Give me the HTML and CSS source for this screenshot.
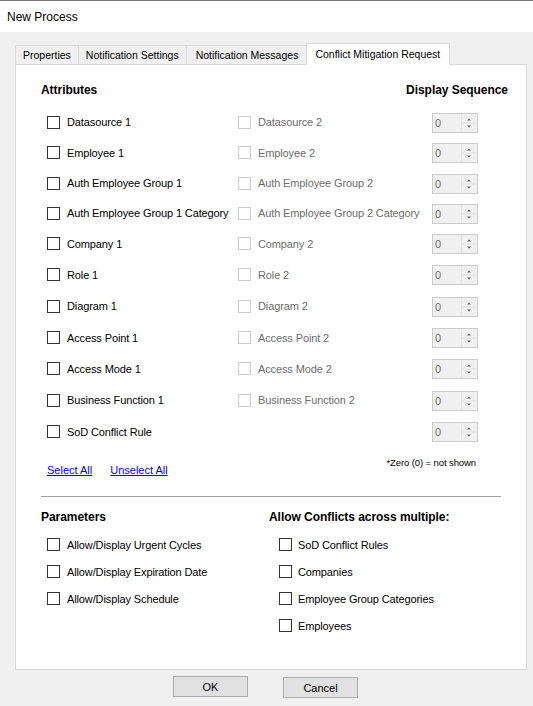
FILE: index.html
```html
<!DOCTYPE html>
<html>
<head>
<meta charset="utf-8">
<title>New Process</title>
<link rel="stylesheet" href="styles.css">
</head>
<body>
<div class="titlebar"><span class="title">New Process</span></div>
<div class="client">
  <div class="tabs">
    <div class="tab">Properties</div>
    <div class="tab">Notification Settings</div>
    <div class="tab">Notification Messages</div>
    <div class="tab active">Conflict Mitigation Request</div>
  </div>
  <div class="panel">
    <div class="head-row"><span class="h">Attributes</span><span class="h">Display Sequence</span></div>
    <div class="attr-grid">
      <label class="chk"><input type="checkbox"><span>Datasource 1</span></label>
      <label class="chk disabled"><input type="checkbox" disabled><span>Datasource 2</span></label>
      <div class="spin"><span class="val">0</span><span class="btns"><svg width="14" height="18" viewBox="0 0 14 18"><path d="M5 6.5h4L7 4.5z M5 11.5h4L7 13.5z" fill="#606060"/><path d="M0 9h14" stroke="#e3e3e3"/></svg></span></div>

      <label class="chk"><input type="checkbox"><span>Employee 1</span></label>
      <label class="chk disabled"><input type="checkbox" disabled><span>Employee 2</span></label>
      <div class="spin"><span class="val">0</span><span class="btns"><svg width="14" height="18" viewBox="0 0 14 18"><path d="M5 6.5h4L7 4.5z M5 11.5h4L7 13.5z" fill="#606060"/><path d="M0 9h14" stroke="#e3e3e3"/></svg></span></div>

      <label class="chk"><input type="checkbox"><span>Auth Employee Group 1</span></label>
      <label class="chk disabled"><input type="checkbox" disabled><span>Auth Employee Group 2</span></label>
      <div class="spin"><span class="val">0</span><span class="btns"><svg width="14" height="18" viewBox="0 0 14 18"><path d="M5 6.5h4L7 4.5z M5 11.5h4L7 13.5z" fill="#606060"/><path d="M0 9h14" stroke="#e3e3e3"/></svg></span></div>

      <label class="chk"><input type="checkbox"><span>Auth Employee Group 1 Category</span></label>
      <label class="chk disabled"><input type="checkbox" disabled><span>Auth Employee Group 2 Category</span></label>
      <div class="spin"><span class="val">0</span><span class="btns"><svg width="14" height="18" viewBox="0 0 14 18"><path d="M5 6.5h4L7 4.5z M5 11.5h4L7 13.5z" fill="#606060"/><path d="M0 9h14" stroke="#e3e3e3"/></svg></span></div>

      <label class="chk"><input type="checkbox"><span>Company 1</span></label>
      <label class="chk disabled"><input type="checkbox" disabled><span>Company 2</span></label>
      <div class="spin"><span class="val">0</span><span class="btns"><svg width="14" height="18" viewBox="0 0 14 18"><path d="M5 6.5h4L7 4.5z M5 11.5h4L7 13.5z" fill="#606060"/><path d="M0 9h14" stroke="#e3e3e3"/></svg></span></div>

      <label class="chk"><input type="checkbox"><span>Role 1</span></label>
      <label class="chk disabled"><input type="checkbox" disabled><span>Role 2</span></label>
      <div class="spin"><span class="val">0</span><span class="btns"><svg width="14" height="18" viewBox="0 0 14 18"><path d="M5 6.5h4L7 4.5z M5 11.5h4L7 13.5z" fill="#606060"/><path d="M0 9h14" stroke="#e3e3e3"/></svg></span></div>

      <label class="chk"><input type="checkbox"><span>Diagram 1</span></label>
      <label class="chk disabled"><input type="checkbox" disabled><span>Diagram 2</span></label>
      <div class="spin"><span class="val">0</span><span class="btns"><svg width="14" height="18" viewBox="0 0 14 18"><path d="M5 6.5h4L7 4.5z M5 11.5h4L7 13.5z" fill="#606060"/><path d="M0 9h14" stroke="#e3e3e3"/></svg></span></div>

      <label class="chk"><input type="checkbox"><span>Access Point 1</span></label>
      <label class="chk disabled"><input type="checkbox" disabled><span>Access Point 2</span></label>
      <div class="spin"><span class="val">0</span><span class="btns"><svg width="14" height="18" viewBox="0 0 14 18"><path d="M5 6.5h4L7 4.5z M5 11.5h4L7 13.5z" fill="#606060"/><path d="M0 9h14" stroke="#e3e3e3"/></svg></span></div>

      <label class="chk"><input type="checkbox"><span>Access Mode 1</span></label>
      <label class="chk disabled"><input type="checkbox" disabled><span>Access Mode 2</span></label>
      <div class="spin"><span class="val">0</span><span class="btns"><svg width="14" height="18" viewBox="0 0 14 18"><path d="M5 6.5h4L7 4.5z M5 11.5h4L7 13.5z" fill="#606060"/><path d="M0 9h14" stroke="#e3e3e3"/></svg></span></div>

      <label class="chk"><input type="checkbox"><span>Business Function 1</span></label>
      <label class="chk disabled"><input type="checkbox" disabled><span>Business Function 2</span></label>
      <div class="spin"><span class="val">0</span><span class="btns"><svg width="14" height="18" viewBox="0 0 14 18"><path d="M5 6.5h4L7 4.5z M5 11.5h4L7 13.5z" fill="#606060"/><path d="M0 9h14" stroke="#e3e3e3"/></svg></span></div>

      <label class="chk"><input type="checkbox"><span>SoD Conflict Rule</span></label>
      <span class="empty"></span>
      <div class="spin"><span class="val">0</span><span class="btns"><svg width="14" height="18" viewBox="0 0 14 18"><path d="M5 6.5h4L7 4.5z M5 11.5h4L7 13.5z" fill="#606060"/><path d="M0 9h14" stroke="#e3e3e3"/></svg></span></div>
    </div>
    <div class="links-row">
      <div class="links"><a href="#">Select All</a><a href="#">Unselect All</a></div>
      <div class="note">*Zero (0) = not shown</div>
    </div>
    <div class="sep"></div>
    <div class="params">
      <div class="pcol left">
        <div class="h">Parameters</div>
        <div class="plist">
          <label class="chk"><input type="checkbox"><span>Allow/Display Urgent Cycles</span></label>
          <label class="chk"><input type="checkbox"><span>Allow/Display Expiration Date</span></label>
          <label class="chk"><input type="checkbox"><span>Allow/Display Schedule</span></label>
        </div>
      </div>
      <div class="pcol right">
        <div class="h">Allow Conflicts across multiple:</div>
        <div class="plist">
          <label class="chk"><input type="checkbox"><span>SoD Conflict Rules</span></label>
          <label class="chk"><input type="checkbox"><span>Companies</span></label>
          <label class="chk"><input type="checkbox"><span>Employee Group Categories</span></label>
          <label class="chk"><input type="checkbox"><span>Employees</span></label>
        </div>
      </div>
    </div>
  </div>
  <div class="buttons">
    <button class="btn">OK</button>
    <button class="btn cancel">Cancel</button>
  </div>
</div>
</body>
</html>
```
FILE: styles.css
```css
* { box-sizing: border-box; }
html, body { margin: 0; padding: 0; }
body {
  width: 533px;
  height: 706px;
  background: #f0f0f0;
  font-family: "Liberation Sans", Arial, sans-serif;
  font-size: 11px;
  color: #000;
  overflow: hidden;
}
.titlebar {
  height: 32px;
  background: #fff;
  border-top: 1px solid #7a7a7a;
  display: flex;
  align-items: center;
  padding-left: 7px;
}
.title { font-size: 12px; line-height: 14px; margin-top: 1px; }
.client { padding: 11px 0 0 15px; }
.tabs {
  display: flex;
  align-items: flex-end;
  height: 21px;
}
.tab {
  height: 19px;
  padding: 0 7px;
  font-size: 10.5px;
  line-height: 18px;
  border: 1px solid #d9d9d9;
  border-bottom: none;
  border-right: none;
  background: #f0f0f0;
  white-space: nowrap;
}
.tab:nth-child(3) { padding: 0 8px 0 9px; }
.tab.active {
  height: 22px;
  margin-bottom: -1px;
  background: #fff;
  border-right: 1px solid #d9d9d9;
  line-height: 20px;
  position: relative;
  z-index: 1;
  padding: 0 9px 0 8px;
}
.panel {
  width: 512px;
  height: 606px;
  background: #fff;
  border: 1px solid #d9d9d9;
  padding: 15px 18px 0 25px;
}
.head-row {
  display: flex;
  justify-content: space-between;
  height: 20px;
  line-height: 20px;
}
.h {
  font-weight: bold;
  font-size: 12px;
  letter-spacing: -0.05px;
  line-height: 20px;
}
.attr-grid {
  margin: 7px 0 0 6px;
  display: grid;
  grid-template-columns: 191px 194px 46px;
  grid-template-rows: 30px 31px 30px 30px 31px 31px 32px 31px 31px 32px 31px;
  align-items: center;
}
.chk {
  display: flex;
  align-items: center;
  gap: 7px;
  white-space: nowrap;
  line-height: 14px;
  letter-spacing: -0.12px;
}
.chk input {
  -webkit-appearance: none;
  appearance: none;
  margin: 0;
  width: 13px;
  height: 13px;
  border: 1px solid #333;
  background: #fff;
  flex: none;
}
.chk.disabled { color: #6d6d6d; }
.chk.disabled input { border-color: #cccccc; }
.spin {
  width: 46px;
  height: 20px;
  border: 1px solid #cccccc;
  background: #f0f0f0;
  display: flex;
  justify-content: space-between;
  align-self: center;
  margin-top: 1px;
}
.spin .val {
  color: #6d6d6d;
  padding-left: 2px;
  line-height: 18px;
}
.spin .btns {
  width: 16px;
  height: 18px;
  border-left: 1px solid #e3e3e3;
  display: block;
}
.spin .btns svg { display: block; }
.links-row {
  display: flex;
  justify-content: space-between;
  height: 36px;
  margin: 0 32px 0 6px;
}
.links { display: flex; gap: 18px; margin-top: 16px; line-height: 14px; }
.links a { color: #0000ff; text-decoration: underline; }
.note { font-size: 9.5px; line-height: 12px; margin-top: 10px; letter-spacing: -0.1px; }
.sep {
  width: 460px;
  height: 1px;
  background: #a0a0a0;
  margin-top: 13px;
}
.params { display: flex; margin-top: 10px; }
.pcol.left { width: 228px; }
.plist { display: flex; flex-direction: column; margin-top: 4px; }
.plist .chk { height: 27px; }
.pcol.left .plist { margin-left: 6px; }
.pcol.right .plist { margin-left: 10px; }
.pcol.right .chk { gap: 6px; }
.buttons {
  display: flex;
  gap: 35px;
  padding-left: 158px;
  margin-top: 6px;
}
.btn {
  width: 75px;
  height: 21px;
  background: #e1e1e1;
  border: 1px solid #adadad;
  font-family: "Liberation Sans", Arial, sans-serif;
  font-size: 11px;
  color: #000;
  padding: 0;
}
.btn.cancel { margin-top: 1px; }
```
